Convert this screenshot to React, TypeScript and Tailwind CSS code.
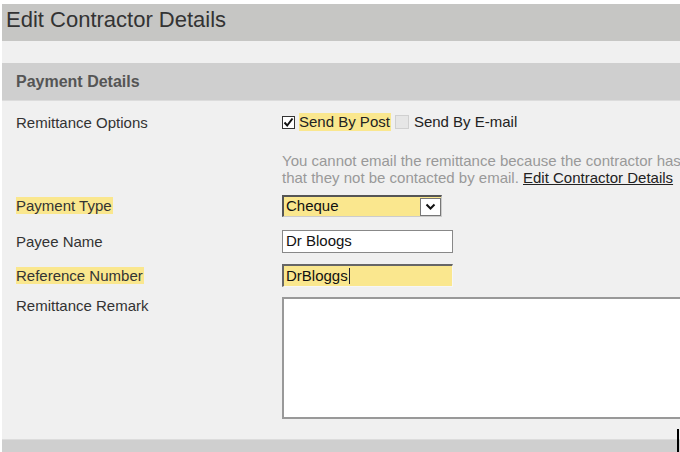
import React from 'react';

const font = { fontFamily: '"Liberation Sans", Arial, sans-serif' };

const Label: React.FC<{ text: string; highlight?: boolean }> = ({ text, highlight }) => (
  <div className="text-[15px] text-[#333] leading-[18px]">
    <span className={highlight ? 'bg-[#fae78e] pr-[1px]' : ''}>{text}</span>
  </div>
);

export default function App() {
  return (
    <div className="w-[680px] h-[452px] bg-white pt-[4px] pl-[2px] overflow-hidden flex flex-col" style={font}>
      <div className="h-[37px] bg-[#c6c6c4] flex items-center pl-[4px] pb-[6px] text-[22px] text-[#333]">
        Edit Contractor Details
      </div>
      <div className="h-[22px] bg-[#f0f0f0]" />
      <div className="h-[38px] bg-[#cfcfcf] border-b border-[#dcdcdc] flex items-center pl-[14px] text-[16px] font-bold text-[#555]">
        Payment Details
      </div>
      <div className="flex-1 bg-[#f0f0f0] pl-[14px] pt-[12px] overflow-hidden">
        <div className="grid grid-cols-[266px_1fr]">
          <div className="pt-[1px]">
            <Label text="Remittance Options" />
          </div>
          <div>
            <div className="flex items-center h-[18px] text-[15px] text-[#222]">
              <span className="w-[13px] h-[13px] border border-[#333] bg-white flex items-center justify-center mr-[4px]">
                <svg width="11" height="11" viewBox="0 0 11 11">
                  <path d="M1.5 5.5 L4.2 8.5 L9.5 1.5" fill="none" stroke="#111" strokeWidth="2" />
                </svg>
              </span>
              <span className="bg-[#fae78e] leading-[18px] pr-[1px]">Send By Post</span>
              <span className="w-[14px] h-[14px] border border-[#d0d0d0] bg-[#e6e6e6] ml-[4px] mr-[5px]" />
              <span>Send By E-mail</span>
            </div>
            <div className="mt-[21px] text-[15px] leading-[17px] text-[#999] whitespace-nowrap">
              You cannot email the remittance because the contractor has
              <br />
              that they not be contacted by email.{' '}
              <a className="text-[#222] underline">Edit Contractor Details</a>
            </div>
          </div>

          <div className="mt-[9px] flex items-center h-[21px]">
            <Label text="Payment Type" highlight />
          </div>
          <div className="mt-[9px]">
            <div className="w-[160px] h-[22px] bg-[#fae78e] border-t-2 border-l-2 border-[#555] border-b border-r border-b-[#ccc] border-r-[#ccc] flex items-center justify-between text-[15px] text-[#111]">
              <span className="pl-[2px]">Cheque</span>
              <span className="w-[21px] h-[18px] bg-white border border-[#777] flex items-center justify-center">
                <svg width="11" height="8" viewBox="0 0 11 8">
                  <path d="M1.5 1.5 L5.5 5.5 L9.5 1.5" fill="none" stroke="#111" strokeWidth="2" />
                </svg>
              </span>
            </div>
          </div>

          <div className="mt-[13px] flex items-center h-[23px]">
            <Label text="Payee Name" />
          </div>
          <div className="mt-[13px]">
            <div className="w-[171px] h-[23px] bg-white border border-[#888] flex items-center pl-[3px] text-[15px] text-[#111]">
              Dr Bloogs
            </div>
          </div>

          <div className="mt-[11px] flex items-center h-[23px]">
            <Label text="Reference Number" highlight />
          </div>
          <div className="mt-[11px]">
            <div className="w-[171px] h-[23px] bg-[#fae78e] border-t-2 border-l-2 border-[#666] border-b border-r border-b-[#f6f6f6] border-r-[#f6f6f6] flex items-center pl-[2px] text-[15px] text-[#111]">
              DrBloggs<span className="w-[1px] h-[16px] bg-[#223] ml-[1px]" />
            </div>
          </div>

          <div className="mt-[10px]">
            <Label text="Remittance Remark" />
          </div>
          <div className="mt-[10px]">
            <div className="w-[420px] h-[122px] bg-white border-l-2 border-t-2 border-b-2 border-[#999]" />
          </div>
        </div>
      </div>
      <div className="h-[13px] bg-[#cfcfcf] border-t border-[#dcdcdc] relative">
        <span className="absolute right-[1px] top-[-11px] w-[2px] h-[24px] bg-black" />
      </div>
    </div>
  );
}
